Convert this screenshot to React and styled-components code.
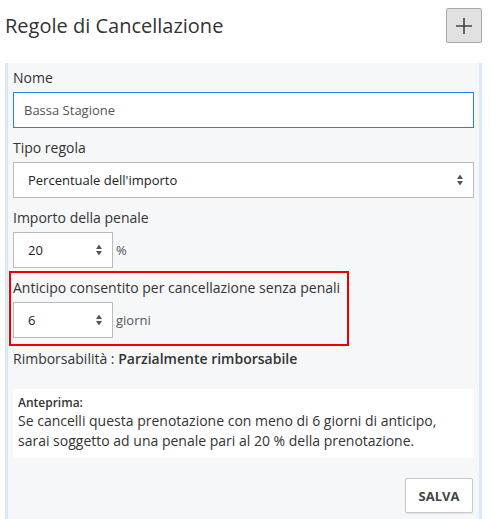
import React from "react";
import styled, { createGlobalStyle } from "styled-components";

const Global = createGlobalStyle`
  html, body { margin: 0; padding: 0; background: #fff; }
  body { font-family: "Open Sans", "Liberation Sans", sans-serif; color: #333; }
  * { box-sizing: border-box; }
`;

const Page = styled.div`
  width: 491px;
  padding: 8px 9px 0 5px;
`;

const Header = styled.div`
  display: flex;
  align-items: center;
  justify-content: space-between;
  height: 35px;
  margin-bottom: 20px;
`;

const Title = styled.h3`
  margin: 0;
  font-size: 20px;
  font-weight: 400;
  color: #333;
  line-height: 26px;
`;

const AddButton = styled.button`
  width: 36px;
  height: 35px;
  padding: 0;
  border: 1px solid #a9a9a9;
  border-radius: 2px;
  background: #e1e1e1;
  display: flex;
  align-items: center;
  justify-content: center;
  color: #444;
`;

const Panel = styled.div`
  background: #f6f7f9;
  border-left: 3px solid #d9e9f7;
  border-right: 3px solid #d9e9f7;
  padding: 5px 5px 6px 5px;
  min-height: 456px;
`;

const Label = styled.div`
  font-size: 14px;
  line-height: 20px;
  color: #333;
  margin-bottom: 4px;
`;

const Field = styled.div`
  margin-bottom: 10px;
`;

const TextInput = styled.div`
  height: 36px;
  border: 1px solid ${(p) => (p.$focused ? "#2a80e2" : "#bbb")};
  background: #fff;
  display: flex;
  align-items: center;
  justify-content: space-between;
  padding: 0 ${(p) => p.$padRight || 10}px 0 ${(p) => p.$padLeft || 10}px;
  font-size: 13px;
  color: ${(p) => (p.$muted ? "#555" : "#222")};
  width: ${(p) => (p.$width ? p.$width + "px" : "auto")};
`;

const InlineRow = styled.div`
  display: flex;
  align-items: center;
  gap: 3px;
`;

const Unit = styled.span`
  font-size: 13px;
  color: #555;
`;

const Highlight = styled.div`
  width: 340px;
  margin-left: -4px;
  border: 2px solid #ee0000;
  padding: 5px 0 6px 2px;
  margin-top: -7px;
`;

const Refund = styled.div`
  font-size: 14px;
  line-height: 20px;
  margin-top: 3px;
  color: #333;
  b { font-weight: 600; }
`;

const Preview = styled.div`
  background: #fff;
  margin-top: 20px;
  padding: 6px 5px 7px 5px;
`;

const PreviewTitle = styled.div`
  font-size: 12px;
  font-weight: 600;
  line-height: 16px;
  color: #333;
`;

const PreviewText = styled.div`
  font-size: 14px;
  line-height: 20px;
  color: #333;
`;

const Footer = styled.div`
  display: flex;
  justify-content: flex-end;
  margin-top: 20px;
  padding-right: 1px;
`;

const SaveButton = styled.button`
  width: 68px;
  height: 35px;
  padding: 0;
  border: 1px solid #c8c8c8;
  border-radius: 2px;
  background: #fff;
  font-family: inherit;
  font-size: 13px;
  font-weight: 700;
  color: #444;
  box-shadow: 0 1px 1px rgba(0,0,0,0.08);
`;

const Spinner = () => (
  <svg width="8" height="12" viewBox="0 0 8 12">
    <path d="M4 0.5 L7 5 L1 5 Z" fill="#555" />
    <path d="M4 11.5 L7 7 L1 7 Z" fill="#555" />
  </svg>
);

const Plus = () => (
  <svg width="18" height="18" viewBox="0 0 18 18">
    <path d="M9 1 V17 M1 9 H17" stroke="#444" strokeWidth="1.6" />
  </svg>
);

export default function App() {
  return (
    <>
      <Global />
      <Page>
        <Header>
          <Title>Regole di Cancellazione</Title>
          <AddButton aria-label="Aggiungi"><Plus /></AddButton>
        </Header>
        <Panel>
          <Field>
            <Label>Nome</Label>
            <TextInput $focused $muted>Bassa Stagione</TextInput>
          </Field>
          <Field>
            <Label>Tipo regola</Label>
            <TextInput $padLeft={14} $padRight={9}>
              <span>Percentuale dell'importo</span>
              <Spinner />
            </TextInput>
          </Field>
          <Field>
            <Label>Importo della penale</Label>
            <InlineRow>
              <TextInput $width={100} $padLeft={14} $padRight={9}>
                <span>20</span>
                <Spinner />
              </TextInput>
              <Unit>%</Unit>
            </InlineRow>
          </Field>
          <Highlight>
            <Label>Anticipo consentito per cancellazione senza penali</Label>
            <InlineRow>
              <TextInput $width={100} $padLeft={14} $padRight={9}>
                <span>6</span>
                <Spinner />
              </TextInput>
              <Unit>giorni</Unit>
            </InlineRow>
          </Highlight>
          <Refund>
            Rimborsabilità : <b>Parzialmente rimborsabile</b>
          </Refund>
          <Preview>
            <PreviewTitle>Anteprima:</PreviewTitle>
            <PreviewText>
              Se cancelli questa prenotazione con meno di 6 giorni di anticipo,
              <br />
              sarai soggetto ad una penale pari al 20 % della prenotazione.
            </PreviewText>
          </Preview>
          <Footer>
            <SaveButton>SALVA</SaveButton>
          </Footer>
        </Panel>
      </Page>
    </>
  );
}
